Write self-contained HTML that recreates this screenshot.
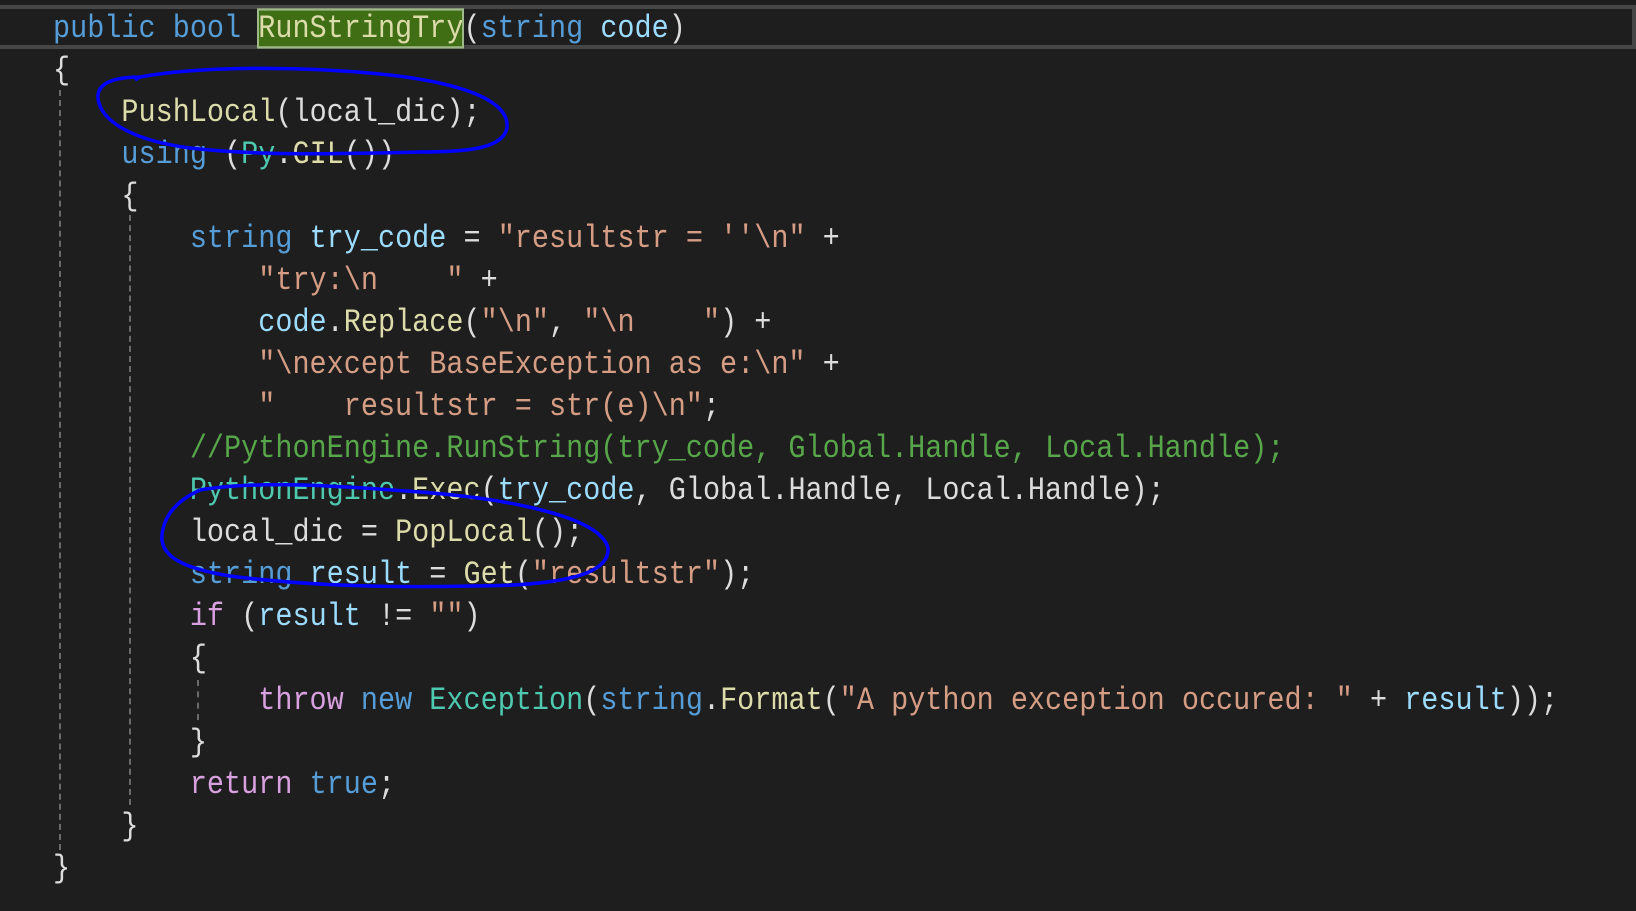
<!DOCTYPE html>
<html><head><meta charset="utf-8"><style>
html,body{margin:0;padding:0;background:#1e1e1e;width:1636px;height:911px;overflow:hidden;position:relative}
.l{position:absolute;left:53px;height:42px;line-height:42px;white-space:pre;font-family:"Liberation Mono",monospace;font-size:28.5px;color:#dcdcdc;transform:scaleY(1.15);transform-origin:0 50%;margin-top:3px}
.k{color:#569cd6}.m{color:#dcdcaa}.s{color:#d69d85}.c{color:#57a64a}.t{color:#4ec9b0}.v{color:#9cdcfe}.p{color:#d8a0df}
.hl{background:#3f6e14;outline:2px solid #9fb88a;outline-offset:-1px}
.g{position:absolute;width:0;border-left:2px dashed #6a6a6a}
</style></head><body>
<div style="position:absolute;left:0;top:5px;width:1632px;height:36px;border-top:4px solid #464646;border-bottom:4px solid #464646;border-right:4px solid #464646;box-sizing:content-box"></div>
<div class="g" style="left:59px;top:90px;height:760px"></div>
<div class="g" style="left:129px;top:215px;height:590px"></div>
<div class="g" style="left:197px;top:680px;height:40px"></div>
<div class="l" style="top:5px"><span class="k">public bool </span><span class="m hl">RunStringTry</span>(<span class="k">string</span> <span class="v">code</span>)</div>
<div class="l" style="top:47px">{</div>
<div class="l" style="top:89px">    <span class="m">PushLocal</span>(local_dic);</div>
<div class="l" style="top:131px">    <span class="k">using</span> (<span class="t">Py</span>.<span class="m">GIL</span>())</div>
<div class="l" style="top:173px">    {</div>
<div class="l" style="top:215px">        <span class="k">string</span> <span class="v">try_code</span> = <span class="s">"resultstr = ''\n"</span> +</div>
<div class="l" style="top:257px">            <span class="s">"try:\n    "</span> +</div>
<div class="l" style="top:299px">            <span class="v">code</span>.<span class="m">Replace</span>(<span class="s">"\n"</span>, <span class="s">"\n    "</span>) +</div>
<div class="l" style="top:341px">            <span class="s">"\nexcept BaseException as e:\n"</span> +</div>
<div class="l" style="top:383px">            <span class="s">"    resultstr = str(e)\n"</span>;</div>
<div class="l" style="top:425px">        <span class="c">//PythonEngine.RunString(try_code, Global.Handle, Local.Handle);</span></div>
<div class="l" style="top:467px">        <span class="t">PythonEngine</span>.<span class="m">Exec</span>(<span class="v">try_code</span>, Global.Handle, Local.Handle);</div>
<div class="l" style="top:509px">        local_dic = <span class="m">PopLocal</span>();</div>
<div class="l" style="top:551px">        <span class="k">string</span> <span class="v">result</span> = <span class="m">Get</span>(<span class="s">"resultstr"</span>);</div>
<div class="l" style="top:593px">        <span class="p">if</span> (<span class="v">result</span> != <span class="s">""</span>)</div>
<div class="l" style="top:635px">        {</div>
<div class="l" style="top:677px">            <span class="p">throw</span> <span class="k">new</span> <span class="t">Exception</span>(<span class="k">string</span>.<span class="m">Format</span>(<span class="s">"A python exception occured: "</span> + <span class="v">result</span>));</div>
<div class="l" style="top:719px">        }</div>
<div class="l" style="top:761px">        <span class="p">return</span> <span class="k">true</span>;</div>
<div class="l" style="top:803px">    }</div>
<div class="l" style="top:845px">}</div>
<svg style="position:absolute;left:0;top:0" width="1636" height="911">
<path d="M140 77 C200 66 300 66 380 74 C460 82 510 100 507 128 C503 148 470 152 420 152 C340 154 260 156 190 148 C130 140 100 120 98 98 C97 84 112 77 140 77 L135 80" fill="none" stroke="#0000ff" stroke-width="3.5"/>
<path d="M200 490 C260 480 340 486 420 492 C500 498 600 515 608 548 C610 575 560 586 470 586 C380 588 300 585 230 576 C180 568 160 555 162 535 C164 515 178 500 200 490" fill="none" stroke="#0000ff" stroke-width="3.5"/>
</svg>
</body></html>
